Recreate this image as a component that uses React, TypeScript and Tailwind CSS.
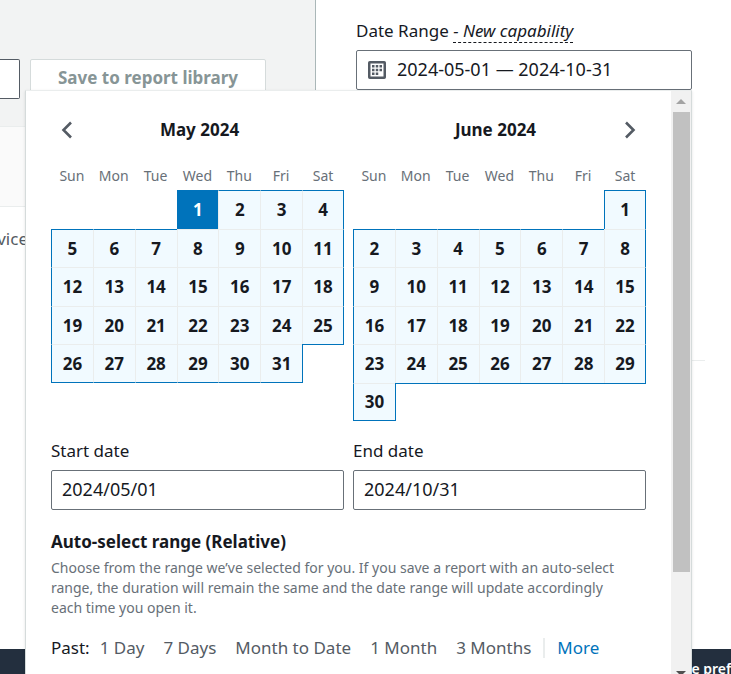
import React, { useState } from "react";

const weekDays = ["Sun", "Mon", "Tue", "Wed", "Thu", "Fri", "Sat"];
const ranges = ["1 Day", "7 Days", "Month to Date", "1 Month", "3 Months"];

function Chevron({ flip }: { flip?: boolean }) {
  return (
    <svg width="12" height="18" viewBox="0 0 12 18" fill="none" className={flip ? "rotate-180" : ""}>
      <path d="M10 1.5L2.5 9L10 16.5" stroke="#545b64" strokeWidth="2.6" />
    </svg>
  );
}

function CalendarIcon() {
  return (
    <svg width="18" height="18" viewBox="0 0 18 18" fill="none">
      <rect x="1.25" y="1.25" width="15.5" height="15.5" rx="0.5" stroke="#545b64" strokeWidth="2.5" />
      <path
        d="M4 4h2.5v2.5H4zM7.75 4h2.5v2.5h-2.5zM11.5 4H14v2.5h-2.5zM4 7.75h2.5v2.5H4zM7.75 7.75h2.5v2.5h-2.5zM11.5 7.75H14v2.5h-2.5zM4 11.5h2.5V14H4zM7.75 11.5h2.5V14h-2.5z"
        fill="#545b64"
      />
    </svg>
  );
}

function Month({
  name,
  first,
  days,
  selected,
  onSelect,
  side,
}: {
  name: string;
  first: number;
  days: number;
  selected?: number;
  onSelect: (day: number) => void;
  side: "prev" | "next";
}) {
  const rows = Math.ceil((first + days) / 7);
  const inRange = (row: number, col: number) => {
    const day = row * 7 + col - first + 1;
    return row >= 0 && col >= 0 && col < 7 && day >= 1 && day <= days;
  };

  // a shared edge is drawn by the cell below it or to its right
  const cellClass = (row: number, col: number) => {
    const here = inRange(row, col);
    const above = inRange(row - 1, col);
    const left = inRange(row, col - 1);
    let cls = "p-0 h-[38px]";
    if (here) cls += " bg-[#f1faff]";
    if (here || above) cls += here && above ? " border-t border-t-[#eaeded]" : " border-t border-t-[#0073bb]";
    if (here || left) cls += here && left ? " border-l border-l-[#eaeded]" : " border-l border-l-[#0073bb]";
    if (here && row === rows - 1) cls += " border-b border-b-[#0073bb]";
    if (here && col === 6) cls += " border-r border-r-[#0073bb]";
    return cls;
  };

  return (
    <div>
      <div className="flex items-center h-8">
        {side === "prev" ? (
          <button type="button" aria-label="Previous month" className="w-8 h-8 flex items-center justify-center">
            <Chevron />
          </button>
        ) : (
          <span className="w-6"></span>
        )}
        <h2 className="flex-1 text-center text-[17px] font-bold">{name}</h2>
        {side === "next" ? (
          <button type="button" aria-label="Next month" className="w-8 h-8 flex items-center justify-center">
            <Chevron flip />
          </button>
        ) : (
          <span className="w-7"></span>
        )}
      </div>
      <table className="w-full table-fixed border-separate border-spacing-0 mt-5">
        <thead>
          <tr>
            {weekDays.map((d) => (
              <th key={d} className="p-0 h-6 text-sm font-normal text-[#687078] pb-1">
                {d}
              </th>
            ))}
          </tr>
        </thead>
        <tbody>
          {Array.from({ length: rows }).map((_, row) => (
            <tr key={row} className="h-[38px] odd:h-[39px]">
              {weekDays.map((d, col) => {
                const day = row * 7 + col - first + 1;
                return (
                  <td key={d} className={cellClass(row, col)}>
                    {inRange(row, col) ? (
                      <button
                        type="button"
                        onClick={() => onSelect(day)}
                        className={
                          selected === day
                            ? "block w-full h-full font-bold bg-[#0073bb] text-white"
                            : "block w-full h-full font-bold"
                        }
                      >
                        {day}
                      </button>
                    ) : null}
                  </td>
                );
              })}
            </tr>
          ))}
        </tbody>
      </table>
    </div>
  );
}

function DatePopup() {
  const [start, setStart] = useState("2024/05/01");
  const [end, setEnd] = useState("2024/10/31");
  const [selected, setSelected] = useState(1);

  return (
    <div className="absolute top-full right-0 w-[667px] flex bg-white border border-t-[#eaeded] border-x-[#d5dbdb] border-b-[#d5dbdb] shadow">
      <div className="flex-1 min-w-0 px-[25px] pt-[23px] pb-6">
        <div className="grid grid-cols-2 gap-[9px] min-h-[308px]">
          <Month name="May 2024" first={3} days={31} selected={selected} onSelect={setSelected} side="prev" />
          <Month name="June 2024" first={6} days={30} onSelect={() => {}} side="next" />
        </div>
        <div className="grid grid-cols-2 gap-[9px] mt-[17px]">
          <div>
            <label htmlFor="start" className="block leading-6">
              Start date
            </label>
            <input
              id="start"
              value={start}
              onChange={(e) => setStart(e.target.value)}
              className="mt-[7px] w-full h-10 px-[10px] pb-[2px] text-lg border border-[#687078] rounded-xs"
            />
          </div>
          <div>
            <label htmlFor="end" className="block leading-6">
              End date
            </label>
            <input
              id="end"
              value={end}
              onChange={(e) => setEnd(e.target.value)}
              className="mt-[7px] w-full h-10 px-[10px] pb-[2px] text-lg border border-[#687078] rounded-xs"
            />
          </div>
        </div>
        <h3 className="mt-5 font-bold leading-6">Auto-select range (Relative)</h3>
        <p className="mt-1 pr-3 text-sm leading-5 text-[#687078]">
          Choose from the range we’ve selected for you. If you save a report with an auto-select range, the
          duration will remain the same and the date range will update accordingly each time you open it.
        </p>
        <div className="mt-[18px] flex items-center leading-6 whitespace-nowrap">
          <span className="mr-[10px]">Past:</span>
          <div className="flex gap-[19px] text-[#545b64]">
            {ranges.map((r) => (
              <button key={r} type="button">
                {r}
              </button>
            ))}
          </div>
          <button type="button" className="ml-3 pl-3 h-5 leading-5 border-l-2 border-[#eaeded] text-[#0073bb]">
            More
          </button>
        </div>
      </div>
      <div className="w-5 bg-[#f1f1f1] flex flex-col items-center">
        <div className="h-[21px] flex items-center">
          <span className="border-x-[5px] border-x-transparent border-b-[5px] border-b-[#a3a3a3]"></span>
        </div>
        <div className="w-[17px] h-[460px] bg-[#c1c1c1]"></div>
        <div className="h-[21px] flex items-center mt-auto">
          <span className="border-x-[5px] border-x-transparent border-t-[5px] border-t-[#505050]"></span>
        </div>
      </div>
    </div>
  );
}

function App() {
  return (
    <div className="h-screen overflow-hidden flex flex-col bg-white text-[17px] text-[#16191f] font-['Noto_Sans','Open_Sans',sans-serif]">
      <div className="flex flex-1 min-h-0">
        <main className="flex-1 min-w-0 overflow-hidden">
          <div className="h-[126px] bg-[#f2f3f3] pt-[59px] flex items-start gap-[10px]">
            <button
              type="button"
              aria-label="Reset"
              className="w-5 h-10 bg-white border border-l-0 border-[#545b64] rounded-r-xs"
            ></button>
            <button
              type="button"
              disabled
              className="h-10 px-[27px] pb-[2px] whitespace-nowrap bg-white border border-[#d5dbdb] rounded-xs font-bold text-[#879596]"
            >
              Save to report library
            </button>
          </div>
          <div className="h-[81px] bg-[#fafafa] border-y border-[#eaeded]"></div>
          <div className="w-7 mt-5 flex justify-end leading-6 text-[#545b64]">Service</div>
        </main>
        <aside className="w-[416px] border-l border-[#aab7b8] pl-10">
          <div className="mr-[26px] h-[361px] border-b border-[#eaeded]">
            <div className="relative z-10 mr-[13px] pt-[19px]">
              <label htmlFor="range" className="block leading-6">
                Date Range{" "}
                <em className="border-b border-dashed border-[#16191f]">- New capability</em>
              </label>
              <button
                id="range"
                type="button"
                className="mt-[7px] w-full h-10 px-[11px] flex items-center gap-[11px] text-lg bg-white border border-[#687078] rounded-xs"
              >
                <CalendarIcon />
                <span className="pb-[2px]">2024-05-01 — 2024-10-31</span>
              </button>
              <DatePopup />
            </div>
          </div>
        </aside>
      </div>
      <footer className="h-[25px] bg-[#232f3e] text-white text-sm font-semibold overflow-hidden flex justify-end">
        <a href="#" className="w-[78px] pt-[10px] leading-5 whitespace-nowrap">
          Cookie preferences
        </a>
      </footer>
    </div>
  );
}

export default App;
